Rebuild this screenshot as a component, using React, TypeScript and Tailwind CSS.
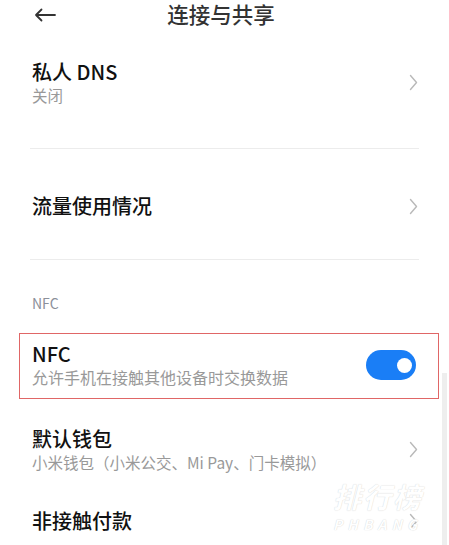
const font = { fontFamily: '"Noto Sans CJK SC", "Noto Sans", sans-serif' };

const Chevron = () => (
  <svg width="9" height="17" viewBox="0 0 9 17" fill="none" stroke="#b9b9b9" strokeWidth="1.4" strokeLinecap="round" strokeLinejoin="round">
    <path d="M1.5 1.5 L7.5 8.5 L1.5 15.5" />
  </svg>
);

interface RowProps {
  title: string;
  sub?: string;
  className?: string;
}

const Row = ({ title, sub, className }: RowProps) => (
  <div className={`flex items-center justify-between pl-8 pr-[31px] ${className ?? ''}`}>
    <div>
      <p className="text-[20px] leading-[26px] font-medium text-[#111]">{title}</p>
      {sub && <p className="text-[15.5px] leading-[20px] text-[#999]">{sub}</p>}
    </div>
    <Chevron />
  </div>
);

export default function App() {
  return (
    <div className="relative w-[449px] h-[545px] overflow-hidden bg-white" style={font}>
      {/* Header */}
      <div className="grid grid-cols-[1fr_auto_1fr] items-center h-[28px]">
        <div className="pl-[34px] pt-[2px]">
          <svg width="22" height="14" viewBox="0 0 22 14" fill="none" stroke="#333" strokeWidth="1.8" strokeLinecap="round" strokeLinejoin="round">
            <path d="M2 7 H21 M7.5 1.5 L2 7 L7.5 12.5" />
          </svg>
        </div>
        <h1 className="text-[21.5px] leading-[28px] font-medium text-[#333] -ml-[7px]">连接与共享</h1>
        <div />
      </div>

      <Row title="私人 DNS" sub="关闭" className="pt-[31px] pb-[43px]" />
      <div className="mx-[30px] h-px bg-[#ececec]" />

      <Row title="流量使用情况" className="pt-[44px] pb-[40px]" />
      <div className="mx-[30px] h-px bg-[#ececec]" />

      <p className="pl-8 pt-[33px] pb-[20px] text-[14px] leading-[20px] text-[#8c909a]">NFC</p>

      {/* NFC toggle row */}
      <div className="mx-[19px] w-[420px] border border-[#e06666] flex items-center justify-between pl-[12px] pr-[22px] pt-[8px] pb-[10px]">
        <div>
          <p className="text-[20px] leading-[24px] font-medium text-[#111]">NFC</p>
          <p className="text-[16px] leading-[22px] text-[#999]">允许手机在接触其他设备时交换数据</p>
        </div>
        <div className="w-[50px] h-[30px] rounded-full bg-[#1a7ef6] flex items-center justify-end pr-[4px]">
          <div className="w-[15px] h-[15px] rounded-full bg-white" />
        </div>
      </div>

      <Row title="默认钱包" sub="小米钱包（小米公交、Mi Pay、门卡模拟）" className="pt-[27px]" />
      <Row title="非接触付款" className="pt-[36px]" />

      {/* scrollbar */}
      <div className="absolute right-[2px] top-[373px] bottom-0 w-[5px] bg-[#eeeeee]" />

      {/* watermark */}
      <div className="absolute left-[333px] top-[482px] italic font-bold text-white leading-none [text-shadow:0_0_1px_#c8c8c8]">
        <p className="text-[28px] tracking-[2px]">排行榜</p>
        <p className="text-[14px] tracking-[5px] mt-[7px]">PHBANG</p>
      </div>
    </div>
  );
}
